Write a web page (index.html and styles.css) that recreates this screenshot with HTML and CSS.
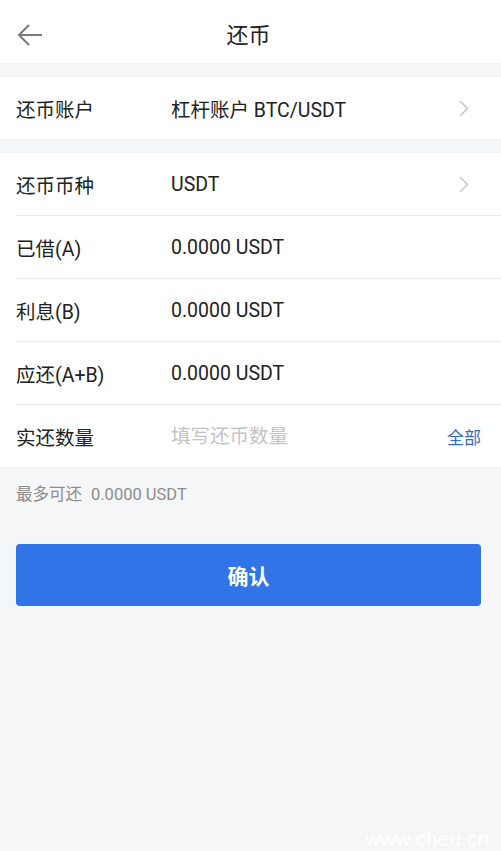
FILE: index.html
```html
<!DOCTYPE html>
<html lang="zh-CN">
<head>
  <meta charset="UTF-8">
  <title>还币</title>
  <link rel="stylesheet" href="styles.css">
</head>
<body>
  <header class="topbar">
    <span class="back">
      <svg width="26" height="22" viewBox="0 0 26 22"><path d="M12 1 L2 11 L12 21 M2 11 H25" fill="none" stroke="#7a7a7a" stroke-width="2"/></svg>
    </span>
    <h1>还币</h1>
  </header>

  <div class="group">
    <div class="row">
      <span class="label">还币账户</span>
      <span class="value">杠杆账户 BTC/USDT</span>
      <svg class="chevron" width="10" height="17" viewBox="0 0 10 17"><path d="M1 1 L8.5 8.5 L1 16" fill="none" stroke="#c8c8c8" stroke-width="1.5"/></svg>
    </div>
  </div>

  <div class="group">
    <div class="row">
      <span class="label">还币币种</span>
      <span class="value">USDT</span>
      <svg class="chevron" width="10" height="17" viewBox="0 0 10 17"><path d="M1 1 L8.5 8.5 L1 16" fill="none" stroke="#c8c8c8" stroke-width="1.5"/></svg>
    </div>
    <div class="row">
      <span class="label">已借(A)</span>
      <span class="value">0.0000 USDT</span>
    </div>
    <div class="row">
      <span class="label">利息(B)</span>
      <span class="value">0.0000 USDT</span>
    </div>
    <div class="row">
      <span class="label">应还(A+B)</span>
      <span class="value">0.0000 USDT</span>
    </div>
    <div class="row">
      <span class="label">实还数量</span>
      <input class="value amount" type="text" placeholder="填写还币数量">
      <span class="all">全部</span>
    </div>
  </div>

  <p class="hint">最多可还<span class="max">0.0000 USDT</span></p>

  <button class="confirm">确认</button>

  <div class="watermark">www.cheu.cn</div>
</body>
</html>
```

FILE: styles.css
```css
body {
  margin: 0;
  background-color: #f5f6f8;
  font-family: Roboto, "Noto Sans CJK SC", sans-serif;
  color: #222;
  height: 851px;
  position: relative;
  overflow: hidden;
}
.topbar {
  height: 63px;
  background-color: #fff;
  display: flex;
  align-items: center;
  justify-content: center;
  position: relative;
}
.topbar h1 {
  margin: 0;
  font-size: 22px;
  font-weight: normal;
  color: #222;
  padding-top: 3px;
  padding-right: 4px;
}
.back {
  position: absolute;
  left: 17px;
  top: 24px;
  display: flex;
}
.group {
  background-color: #fff;
  margin-top: 14px;
  padding-left: 16px;
}
.row {
  height: 62px;
  display: flex;
  align-items: center;
  border-bottom: 1px solid #ececec;
  font-size: 19.5px;
}
.row:last-child {
  border-bottom: none;
}
.label {
  width: 155px;
  flex-shrink: 0;
}
.value {
  flex: 1;
  min-width: 0;
}
.amount {
  border: none;
  outline: none;
  font: inherit;
  padding: 0;
  color: #222;
  background: transparent;
}
.amount::placeholder {
  color: #c4c4c4;
}
.chevron {
  margin-right: 32px;
}
.all {
  color: #2f6bc0;
  font-size: 17px;
  margin-right: 20px;
}
.hint {
  margin: 14px 16px 0;
  font-size: 16.5px;
  color: #8c8c8c;
}
.max {
  margin-left: 9px;
}
.confirm {
  display: block;
  width: 465px;
  height: 62px;
  margin: 39px 0 0 16px;
  border: none;
  border-radius: 4px;
  background-color: #3074e8;
  color: #fff;
  font-family: inherit;
  font-size: 21px;
  font-weight: bold;
}
.watermark {
  position: absolute;
  right: 12px;
  bottom: 0;
  font-size: 21px;
  color: #fff;
  font-family: "Liberation Sans", sans-serif;
}
```
